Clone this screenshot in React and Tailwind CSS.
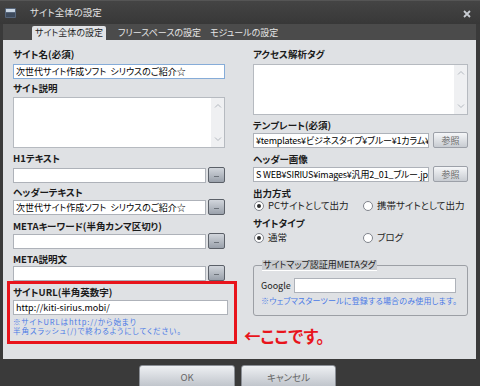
import React from "react";

const Label = ({ children, className = "" }) => (
  <div className={"h-[14px] leading-[14px] pt-px text-[9.5px] font-bold text-[#1b1b1b] whitespace-nowrap " + className}>{children}</div>
);

const Field = ({ children, className = "", focus = false }) => (
  <div
    className={
      "h-[15px] bg-white border text-[9px] leading-[13px] px-[2px] text-black whitespace-nowrap overflow-hidden " +
      (focus ? "border-[#86acd8] " : "border-[#aeb2b9] ") +
      className
    }
  >
    {children}
  </div>
);

const Dots = () => (
  <div className="w-[17px] h-[16px] shrink-0 rounded-[2px] border border-[#5b6068] bg-linear-to-b from-[#d2d6dc] to-[#9aa1ab] flex items-end justify-center pb-[5px]">
    <div className="w-[5px] h-px bg-[#6d737b]" />
  </div>
);

const Ref = () => (
  <div className="w-[35px] h-[16px] shrink-0 rounded-[2px] border border-[#9ca0a8] bg-linear-to-b from-[#f5f6f8] to-[#c8ccd2] flex items-center justify-center text-[9px] leading-none text-[#6a6a6a]">
    参照
  </div>
);

const Chevron = ({ up }) => (
  <svg width="8" height="5" viewBox="0 0 8 5">
    <polyline
      points={up ? "1,4.5 4,1.5 7,4.5" : "1,0.5 4,3.5 7,0.5"}
      fill="none"
      stroke="#b3b8bf"
      strokeWidth="1"
    />
  </svg>
);

const TextArea = () => (
  <div className="h-[51px] bg-white border border-[#b6bac0] flex">
    <div className="flex-1" />
    <div className="w-[13px] bg-[#eff0f2] flex flex-col items-center justify-between py-[5px]">
      <Chevron up />
      <Chevron />
    </div>
  </div>
);

const Radio = ({ checked, children }) => (
  <div className="flex items-center gap-[4px] h-[14px]">
    <div className="w-[10px] h-[10px] rounded-full border border-[#80848c] bg-white flex items-center justify-center">
      {checked && <div className="w-[4px] h-[4px] rounded-full bg-[#2d2d2d]" />}
    </div>
    <span className="text-[9.5px] leading-none text-[#222]">{children}</span>
  </div>
);

export default function App() {
  return (
    <div className="w-[480px] h-[386px] bg-[#3a3a3a] flex flex-col overflow-hidden font-['Noto_Sans_CJK_JP',sans-serif] [font-feature-settings:'palt']">
      {/* title bar */}
      <div className="h-[24px] shrink-0 flex items-center bg-linear-to-b from-[#444] to-[#383838] border-t border-[#555] relative">
        <svg className="ml-[5px]" width="11" height="10" viewBox="0 0 11 10">
          <rect x="0" y="0" width="11" height="10" rx="1" fill="#56657a" />
          <rect x="1" y="1" width="9" height="3" fill="#c9d6e4" />
          <rect x="1" y="5" width="9" height="4" fill="#3d4a5c" />
        </svg>
        <span className="ml-[14px] text-[9.5px] leading-none text-[#e2e2e2]">サイト全体の設定</span>
        <svg className="absolute right-[9px] top-[9px]" width="8" height="8" viewBox="0 0 8 8">
          <path d="M1 1 L7 7 M7 1 L1 7" stroke="#c8ccd2" strokeWidth="1.8" />
        </svg>
      </div>

      <div className="flex-1 min-h-0 flex flex-col ml-[3px] mr-[4px]">
        {/* tab strip */}
        <div className="h-[16px] shrink-0 bg-[#4b4b4b] flex items-end text-[9px]">
          <div className="ml-[29px] w-[74px] h-[14px] leading-[14px] bg-[#e1e3e6] rounded-t-[2px] text-center text-[#1e1e1e] whitespace-nowrap">
            サイト全体の設定
          </div>
          <div className="ml-[12px] w-[92px] h-[14px] leading-[14px] text-[#e6e6e6] whitespace-nowrap">フリースペースの設定</div>
          <div className="h-[14px] leading-[14px] text-[#e6e6e6] whitespace-nowrap">モジュールの設定</div>
        </div>

        {/* panel */}
        <div className="h-[319px] shrink-0 bg-[#dfe1e4] pt-[6px] pl-[10px] pr-[8px] grid grid-cols-[212px_215px] gap-x-[28px] items-start">
          {/* left column */}
          <div className="flex flex-col">
            <Label>サイト名(必須)</Label>
            <Field focus className="mt-[4px]">次世代サイト作成ソフト&nbsp;&nbsp;シリウスのご紹介☆</Field>
            <Label className="mt-px">サイト説明</Label>
            <div className="mt-[3px]"><TextArea /></div>
            <Label className="mt-[2px]">H1テキスト</Label>
            <div className="mt-[3px] flex items-center gap-[2px]">
              <Field className="flex-1" />
              <Dots />
            </div>
            <Label className="mt-px">ヘッダーテキスト</Label>
            <div className="mt-px flex items-center gap-[2px]">
              <Field className="flex-1">次世代サイト作成ソフト&nbsp;&nbsp;シリウスのご紹介☆</Field>
              <Dots />
            </div>
            <Label className="mt-[3px]">METAキーワード(半角カンマ区切り)</Label>
            <div className="mt-px flex items-center gap-[2px]">
              <Field className="flex-1" />
              <Dots />
            </div>
            <Label className="mt-[2px]">META説明文</Label>
            <div className="flex items-center gap-[2px]">
              <Field className="flex-1" />
              <Dots />
            </div>
            <div className="-ml-[6px] w-[230px] h-[63px] border-[3px] border-[#e8141c] pl-[3px] pr-[6px] flex flex-col">
              <Label>サイトURL(半角英数字)</Label>
              <Field className="mt-[2px] h-[14px] leading-[12px] text-[9.5px]">http://kiti-sirius.mobi/</Field>
              <div className="mt-[2px] text-[7.5px] leading-[9px] text-[#4a7ae6] tracking-[0.9px] whitespace-nowrap">
                <div className="h-[9px]">※サイトURLはhttp://から始まり</div>
                <div className="h-[9px]">半角スラッシュ(/)で終わるようにしてください。</div>
              </div>
            </div>
          </div>

          {/* right column */}
          <div className="flex flex-col">
            <Label>アクセス解析タグ</Label>
            <div className="mt-[4px]"><TextArea /></div>
            <Label className="mt-[2px]">テンプレート(必須)</Label>
            <div className="mt-px flex items-center gap-[4px]">
              <Field className="flex-1 text-[8.5px] tracking-[-0.2px]">¥templates¥ビジネスタイプ¥ブルー¥1カラム¥</Field>
              <Ref />
            </div>
            <Label className="mt-[3px]">ヘッダー画像</Label>
            <div className="mt-px flex items-center gap-[4px]">
              <Field className="flex-1 text-[8.5px] tracking-[-0.2px]">S WEB¥SIRIUS¥images¥汎用2_01_ブルー.jpg</Field>
              <Ref />
            </div>
            <Label className="mt-[3px]">出力方式</Label>
            <div className="flex items-center">
              <div className="w-[110px] pl-[1px]"><Radio checked>PCサイトとして出力</Radio></div>
              <Radio>携帯サイトとして出力</Radio>
            </div>
            <Label className="mt-[2px]">サイトタイプ</Label>
            <div className="mt-[2px] flex items-center">
              <div className="w-[110px] pl-[1px]"><Radio checked>通常</Radio></div>
              <Radio>ブログ</Radio>
            </div>

            <div className="mt-[20px] h-[51px] border border-[#9c9fa5] rounded-[3px] relative pl-[7px] pr-[11px] pt-[12px]">
              <div className="absolute left-[8px] -top-[6px] px-[1px] bg-[#c9cbcf] border-b border-white text-[9px] leading-[10px] text-[#222] whitespace-nowrap">
                サイトマップ認証用METAタグ
              </div>
              <div className="flex items-center">
                <span className="text-[9px] text-[#222] w-[33px]">Google</span>
                <Field className="flex-1 h-[14px]" />
              </div>
              <div className="mt-[3px] text-[8px] leading-[10px] text-[#4a7ae6] tracking-[0.2px] whitespace-nowrap">
                ※ウェブマスターツールに登録する場合のみ使用します。
              </div>
            </div>

            <div className="mt-[10px] -ml-[9px] text-[16.5px] leading-[20px] font-bold text-[#e8141c] whitespace-nowrap">
              ←ここです。
            </div>
          </div>
        </div>

        {/* footer */}
        <div className="flex-1 min-h-0 overflow-hidden flex items-start pl-[136px] pt-[6px] gap-[6px]">
          <div className="w-[96px] h-[24px] shrink-0 rounded-t-[3px] border border-[#8a8e95] bg-linear-to-b from-[#eef0f3] to-[#bcc1c8] flex items-center justify-center text-[9.5px] text-[#666]">
            OK
          </div>
          <div className="w-[95px] h-[24px] shrink-0 rounded-t-[3px] border border-[#8a8e95] bg-linear-to-b from-[#eef0f3] to-[#bcc1c8] flex items-center justify-center text-[9.5px] text-[#666]">
            キャンセル
          </div>
        </div>
      </div>
    </div>
  );
}
